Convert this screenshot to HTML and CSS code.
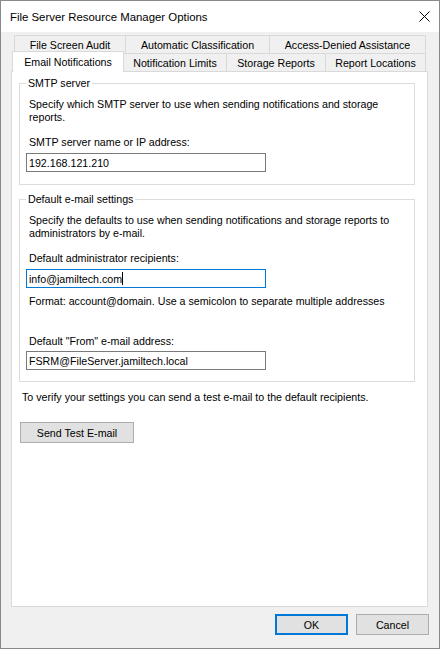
FILE: index.html
```html
<!DOCTYPE html>
<html>
<head>
<meta charset="utf-8">
<link rel="stylesheet" href="styles.css">
</head>
<body>
<div class="window">
  <div class="titlebar">
    <span class="title">File Server Resource Manager Options</span>
    <svg class="close" width="11" height="11" viewBox="0 0 11 11"><path d="M0.5 0.5 L10.5 10.5 M10.5 0.5 L0.5 10.5" stroke="#000" stroke-width="1" fill="none"/></svg>
  </div>
  <div class="client">
    <div class="tabrow back">
      <div class="tab t-fsa">File Screen Audit</div>
      <div class="tab t-ac">Automatic Classification</div>
      <div class="tab t-ada">Access-Denied Assistance</div>
    </div>
    <div class="tabrow front">
      <div class="tab selected">Email Notifications</div>
      <div class="tab t-nl">Notification Limits</div>
      <div class="tab t-sr">Storage Reports</div>
      <div class="tab t-rl">Report Locations</div>
    </div>
    <div class="panel">
      <fieldset class="group g1">
        <legend>SMTP server</legend>
        <p class="desc">Specify which SMTP server to use when sending notifications and storage<br>reports.</p>
        <div class="label">SMTP server name or IP address:</div>
        <div class="field">192.168.121.210</div>
      </fieldset>
      <fieldset class="group g2">
        <legend>Default e-mail settings</legend>
        <p class="desc">Specify the defaults to use when sending notifications and storage reports to<br>administrators by e-mail.</p>
        <div class="label">Default administrator recipients:</div>
        <div class="field focus">info@jamiltech.com<span class="caret"></span></div>
        <div class="hint">Format: account@domain. Use a semicolon to separate multiple addresses</div>
        <div class="label from">Default "From" e-mail address:</div>
        <div class="field from-field">FSRM@FileServer.jamiltech.local</div>
      </fieldset>
      <div class="verify">To verify your settings you can send a test e-mail to the default recipients.</div>
      <div class="btn send">Send Test E-mail</div>
    </div>
    <div class="footer">
      <div class="btn ok">OK</div>
      <div class="btn cancel">Cancel</div>
    </div>
  </div>
</div>
</body>
</html>
```
FILE: styles.css
```css
html, body {
  margin: 0;
  background: #ffffff;
}
body {
  font-family: "Liberation Sans", Arial, sans-serif;
  font-size: 10.67px;
  color: #000;
}
.window {
  width: 440px;
  height: 649px;
  box-sizing: border-box;
  border: 1px solid #8a8a8a;
  display: flex;
  flex-direction: column;
  background: #f0f0f0;
}
.titlebar {
  height: 31px;
  flex: none;
  background: #fff;
  display: flex;
  align-items: center;
  justify-content: space-between;
  padding: 0 9px 0 9px;
}
.title {
  font-size: 11.4px;
}
.close {
  display: block;
}
.client {
  flex: 1;
  display: flex;
  flex-direction: column;
  padding-top: 3px;
}
.tabrow {
  display: flex;
  height: 18px;
  flex: none;
}
.tabrow.back {
  margin-left: 13px;
}
.tabrow.front {
  margin-left: 11px;
  align-items: flex-end;
}
.tab {
  box-sizing: border-box;
  height: 18px;
  flex: none;
  border: 1px solid #d9d9d9;
  border-bottom: none;
  background: #f0f0f0;
  display: flex;
  align-items: center;
  justify-content: center;
  white-space: nowrap;
}
.tab + .tab {
  margin-left: -1px;
}
.t-fsa { width: 112px; }
.t-ac { width: 145px; }
.t-ada { width: 157px; }
.tab.selected {
  width: 112px;
  height: 21px;
  margin-bottom: -1px;
  padding-bottom: 1px;
  background: #fff;
  z-index: 1;
}
.t-nl { width: 104px; }
.t-sr { width: 100px; }
.t-rl { width: 101px; }
.panel {
  flex: none;
  margin-left: 10px;
  width: 417px;
  height: 536px;
  box-sizing: border-box;
  border: 1px solid #d9d9d9;
  background: #fff;
  padding: 4px 0 0 7px;
}
.group {
  margin: 0;
  width: 396px;
  min-width: 0;
  box-sizing: border-box;
  border: 1px solid #dcdcdc;
  padding: 8px 9px 12px 9px;
}
.group legend {
  padding: 0 2px;
  margin-left: -3px;
  line-height: 14px;
}
.g2 {
  margin-top: 7px;
  padding-bottom: 11px;
}
.desc {
  margin: 0;
  line-height: 13px;
  white-space: nowrap;
}
.label {
  margin-top: 12px;
  line-height: 13px;
}
.label.from {
  margin-top: 27px;
}
.field {
  margin: 4px 0 0 -3px;
  width: 240px;
  height: 19px;
  box-sizing: border-box;
  border: 1px solid #7a7a7a;
  padding: 0 2px;
  display: flex;
  align-items: center;
  white-space: nowrap;
}
.field.focus {
  border-color: #0078d7;
}
.field.from-field {
  margin-top: 3px;
}
.caret {
  display: inline-block;
  width: 1px;
  height: 13px;
  background: #000;
}
.hint {
  margin-top: 7px;
  line-height: 13px;
}
.verify {
  margin: 9px 0 0 3px;
  line-height: 13px;
}
.btn {
  box-sizing: border-box;
  height: 21px;
  background: #e1e1e1;
  border: 1px solid #adadad;
  display: flex;
  align-items: center;
  justify-content: center;
}
.send {
  width: 114px;
  margin: 18px 0 0 1px;
}
.footer {
  display: flex;
  justify-content: flex-end;
  gap: 8px;
  margin-top: 7px;
  padding-right: 10px;
}
.ok, .cancel {
  width: 73px;
}
.ok {
  border: 2px solid #0078d7;
}
```
